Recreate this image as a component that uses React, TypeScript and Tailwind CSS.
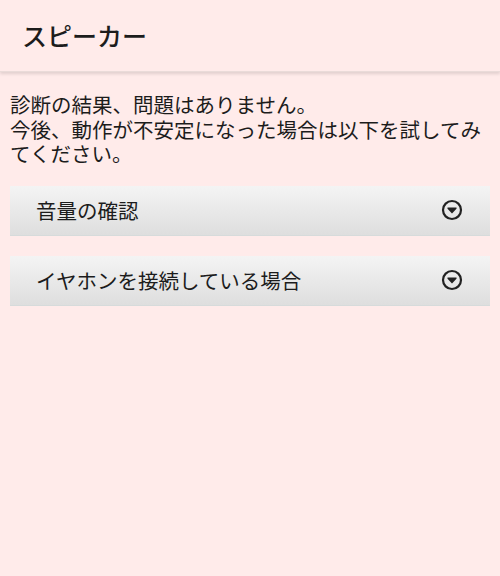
import React from "react";

const items = ["音量の確認", "イヤホンを接続している場合"];

function DropIcon() {
  return (
    <svg width="22" height="22" viewBox="0 0 22 22" className="shrink-0">
      <circle cx="11" cy="11" r="9" fill="none" stroke="#222" strokeWidth="2.2" />
      <path d="M6.5 8.6 H15.5 V9.8 L11 14.6 L6.5 9.8 Z" fill="#222" />
    </svg>
  );
}

export default function App() {
  return (
    <div
      className="w-[500px] h-[576px] bg-[#ffebea] text-[#1c1c1c] overflow-hidden"
      style={{ fontFamily: '"Noto Sans CJK JP", "Noto Sans", sans-serif' }}
    >
      {/* Header */}
      <div className="h-[72px] flex items-center pl-[22px] shadow-[0_2px_3px_rgba(0,0,0,0.12)] border-b border-[#eadbd9]">
        <h1 className="text-[25px] font-medium leading-none">スピーカー</h1>
      </div>

      {/* Message */}
      <p className="px-[10px] pt-[20px] text-[20.5px] leading-[24.5px]">
        診断の結果、問題はありません。
        <br />
        今後、動作が不安定になった場合は以下を試してみてください。
      </p>

      {/* Accordion rows */}
      <div className="px-[10px] pt-[20px] flex flex-col gap-[20px]">
        {items.map((label) => (
          <div
            key={label}
            className="h-[50px] flex items-center justify-between pl-[26px] pr-[27px] bg-gradient-to-b from-[#f4f4f4] to-[#dedede] border-b border-[#d6dbdb] cursor-pointer"
          >
            <span className="text-[20.5px] leading-none">{label}</span>
            <DropIcon />
          </div>
        ))}
      </div>
    </div>
  );
}
